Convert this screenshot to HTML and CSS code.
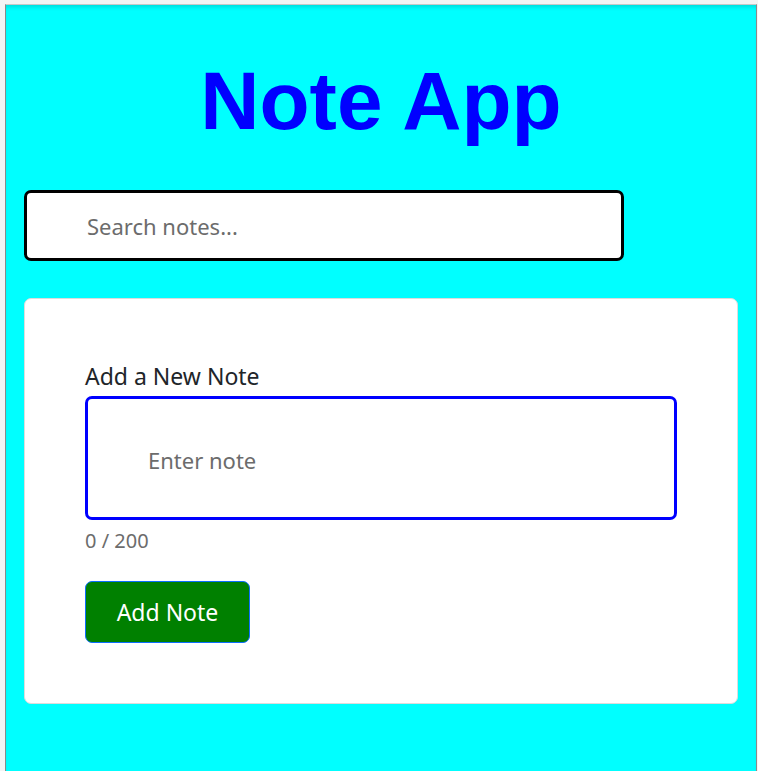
FILE: index.html
```html
<!DOCTYPE html>
<html lang="en">
<head>
<meta charset="utf-8">
<title>Note App</title>
<link rel="stylesheet" href="styles.css">
</head>
<body>
<div class="frame">
  <div class="panel">
    <h1 class="title">Note App</h1>
    <input class="search" type="text" placeholder="Search notes...">
    <div class="card">
      <label class="label" for="note">Add a New Note</label>
      <textarea id="note" class="note" placeholder="Enter note"></textarea>
      <div class="counter">0 / 200</div>
      <button class="add-btn" type="button">Add Note</button>
    </div>
  </div>
</div>
</body>
</html>
```

FILE: styles.css
```css
html, body {
  margin: 0;
  padding: 0;
  height: 100%;
}
body {
  background: #e6e6e6;
  overflow: hidden;
}
.frame {
  padding: 4px 0 0 5px;
  height: 100%;
  box-sizing: border-box;
  background: #f4f4f4;
}
.panel {
  width: 752px;
  height: 100%;
  box-sizing: border-box;
  background: #00ffff;
  border-left: 1px solid #8a8a8a;
  border-right: 1px solid #8a8a8a;
  border-top: 1px solid #c8c8c8;
  box-shadow: inset 0 4px 4px -2px rgba(0,0,0,0.15);
  padding: 1px 18px 0 18px;
  font-family: "Noto Sans", "Open Sans", sans-serif;
}
.title {
  margin: 49px 0 0 0;
  text-align: center;
  font-family: "Liberation Sans", Arial, sans-serif;
  font-weight: bold;
  font-size: 82px;
  line-height: 92px;
  color: #0000ff;
}
.search {
  display: block;
  margin-top: 43px;
  width: 600px;
  height: 71px;
  box-sizing: border-box;
  border: 3px solid #000;
  border-radius: 7px;
  padding: 0 0 0 60px;
  font-family: inherit;
  font-size: 22px;
  color: #212529;
  background: #fff;
  outline: none;
}
.search::placeholder, .note::placeholder {
  color: #6c6c6c;
}
.card {
  margin-top: 37px;
  background: #fff;
  border: 1px solid #dcdcdc;
  border-radius: 7px;
  padding: 60px;
  display: flex;
  flex-direction: column;
  align-items: flex-start;
}
.label {
  font-size: 23px;
  line-height: 30px;
  color: #212529;
  margin-top: 2px;
  margin-bottom: 5px;
}
.note {
  width: 100%;
  height: 124px;
  box-sizing: border-box;
  border: 3px solid #0000ff;
  border-radius: 7px;
  padding: 46px 60px;
  font-family: inherit;
  font-size: 22px;
  line-height: 30px;
  resize: none;
  outline: none;
  overflow: hidden;
}
.counter {
  margin-top: 6px;
  font-size: 20px;
  line-height: 30px;
  color: #6c6c6c;
}
.add-btn {
  margin-top: 25px;
  width: 165px;
  height: 62px;
  background: #008000;
  color: #fff;
  border: 1px solid #0d6efd;
  border-radius: 7px;
  font-family: inherit;
  font-size: 23px;
  padding: 0;
  cursor: pointer;
}
```
